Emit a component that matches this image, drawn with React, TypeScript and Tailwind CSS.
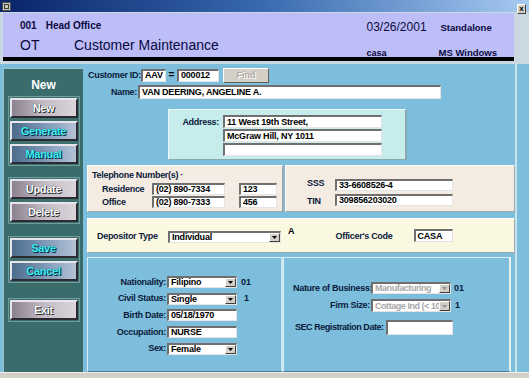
import React from "react";

const LBL = "text-[9px] font-bold text-[#0b1a3c] tracking-[-0.3px] leading-none whitespace-nowrap";

function Field({ cls, text, gray }: { cls: string; text?: string; gray?: boolean }) {
  return (
    <div
      className={`bg-white border-t-2 border-l-2 border-t-[#6f6f6f] border-l-[#6f6f6f] border-b border-r border-b-[#e4e4e4] border-r-[#e4e4e4] flex items-center pl-[2px] text-[9px] font-bold leading-none tracking-[-0.2px] overflow-hidden whitespace-nowrap ${gray ? "text-[#a8a8a8]" : "text-black"} ${cls}`}
    >
      {text}
    </div>
  );
}

function Select({ cls, text, gray }: { cls: string; text: string; gray?: boolean }) {
  return (
    <div
      className={`bg-white border-t-2 border-l-2 border-t-[#6f6f6f] border-l-[#6f6f6f] border-b border-r border-b-[#e4e4e4] border-r-[#e4e4e4] flex items-stretch text-[9px] font-bold leading-none overflow-hidden whitespace-nowrap ${gray ? "text-[#a8a8a8] tracking-[-0.45px]" : "text-black tracking-[-0.2px]"} ${cls}`}
    >
      <div className="flex-1 flex items-center pl-[2px] overflow-hidden">{text}</div>
      <div className="w-[11px] shrink-0 bg-[#d4d0c8] border border-t-white border-l-white border-b-[#404040] border-r-[#404040] flex items-center justify-center">
        <svg width="5" height="3" viewBox="0 0 5 3">
          <path d="M0 0H5L2.5 3Z" fill={gray ? "#909090" : "#000"} />
        </svg>
      </div>
    </div>
  );
}

function SideBtn({ label, blue }: { label: string; blue?: boolean }) {
  return (
    <div
      className={`w-[68px] h-[20px] flex items-center justify-center border-2 border-t-[#e8e4ec] border-l-[#e8e4ec] border-b-[#2a2a30] border-r-[#2a2a30] text-[11px] font-bold leading-none tracking-[-0.3px] ${
        blue
          ? "bg-gradient-to-r from-[#4c6c8c] via-[#7d98b6] to-[#b4c2d6] text-[#3ef0f4] [text-shadow:0_0_1px_#0b2a40,1px_1px_0_#0b2a40]"
          : "bg-gradient-to-r from-[#8c8290] via-[#c4bcc6] to-[#dcd4dc] text-white [text-shadow:0_0_1px_#202020,1px_1px_0_#303030]"
      }`}
    >
      {label}
    </div>
  );
}

function Group({ children }: { children: React.ReactNode }) {
  return (
    <div className="flex flex-col gap-[3px] p-[1px] border border-[#6f9c9c] bg-[#3f7070]">{children}</div>
  );
}

export default function App() {
  return (
    <div className="w-[529px] h-[378px] bg-[#d4d0c8] flex flex-col overflow-hidden font-['Liberation_Sans',Arial,sans-serif]">
      {/* title bar */}
      <div className="h-[12px] flex items-center bg-gradient-to-r from-[#0a246a] via-[#3a6ab0] to-[#a6caf0]">
        <div className="ml-[2px] w-[9px] h-[9px] bg-[#c8c4bc] border border-[#505050] flex items-center justify-center">
          <div className="w-[5px] h-[5px] border border-[#404040]" />
        </div>
      </div>
      {/* header */}
      <div className="h-[52px] flex bg-[#cad8e2]">
        <div className="ml-[3px] mt-[1px] w-[511px] h-[48px] bg-[#bdbdf7] border-b-4 border-black flex text-[#0a0a40]">
          <div className="flex flex-col pl-[17px] pt-[8px]">
            <div className="flex items-center text-[10px] font-bold leading-none">
              <span>001</span>
              <span className="ml-[9px]">Head Office</span>
            </div>
            <div className="flex items-center text-[14px] leading-none mt-[7px]">
              <span className="w-[54px]">OT</span>
              <span>Customer Maintenance</span>
            </div>
          </div>
          <div className="ml-auto flex flex-col pr-[17px] pt-[8px]">
            <div className="flex items-end">
              <span className="text-[12px] leading-none w-[74px]">03/26/2001</span>
              <span className="text-[9.5px] font-bold leading-none mb-[1px]">Standalone</span>
            </div>
            <div className="flex items-end mt-[15px]">
              <span className="text-[9px] font-bold leading-none w-[72px]">casa</span>
              <span className="text-[9.5px] font-bold leading-none">MS Windows</span>
            </div>
          </div>
        </div>
        <div className="flex-1 relative">
          <div className="absolute left-[3px] -top-[8px] w-[9px] h-[10px] bg-[#d4d0c8] border border-t-white border-l-white border-b-[#404040] border-r-[#404040] text-[8px] font-bold leading-none flex items-center justify-center">
            x
          </div>
        </div>
      </div>
      {/* body */}
      <div className="h-[308px] flex bg-[#7cbedb]">
        {/* sidebar */}
        <div className="ml-[3px] mt-[4px] w-[80px] h-[304px] bg-[#3b6c6c] border-l border-t border-[#9cc4c8] flex flex-col items-center">
          <div className="h-[27px] flex items-center justify-center text-white text-[12px] font-bold leading-none pt-[4px]">New</div>
          <Group>
            <SideBtn label="New" />
            <SideBtn label="Generate" blue />
            <SideBtn label="Manual" blue />
          </Group>
          <div className="h-[11px]" />
          <Group>
            <SideBtn label="Update" />
            <SideBtn label="Delete" />
          </Group>
          <div className="h-[12px]" />
          <Group>
            <SideBtn label="Save" blue />
            <SideBtn label="Cancel" blue />
          </Group>
          <div className="h-[15px]" />
          <Group>
            <SideBtn label="Exit" />
          </Group>
        </div>
        {/* main */}
        <div className="ml-[4px] w-[430px] flex flex-col border-r-2 border-[#c8e4ee]">
          {/* customer id */}
          <div className="mt-[4px] h-[14px] flex items-center">
            <span className={`${LBL} ml-[1px] w-[53px]`}>Customer ID:</span>
            <Field cls="w-[25px] h-[13px]" text="AAV" />
            <span className="w-[11px] text-center text-[10px] font-bold leading-none">=</span>
            <Field cls="w-[42px] h-[13px]" text="000012" />
            <div className="ml-[4px] w-[46px] h-[15px] bg-[#d4d0c8] border border-t-white border-l-white border-b-[#606060] border-r-[#606060] flex items-center justify-center text-[9px] font-bold text-[#b0aca6] [text-shadow:1px_1px_0_#fff] leading-none">
              Find
            </div>
          </div>
          {/* name */}
          <div className="mt-[3px] h-[14px] flex items-center">
            <span className={`${LBL} w-[51px] text-right pr-[1px]`}>Name:</span>
            <Field cls="w-[303px] h-[14px]" text="VAN DEERING, ANGELINE A." />
          </div>
          {/* address */}
          <div className="mt-[10px] ml-[81px] w-[239px] h-[51px] bg-[#c6ecec] border border-t-[#e8f8f8] border-l-[#e8f8f8] border-b-[#8aa8b0] border-r-[#8aa8b0] border-r-2 flex pt-[5px]">
            <span className={`${LBL} w-[50px] text-right pt-[3px]`}>Address:</span>
            <div className="ml-[4px] flex flex-col gap-[1px]">
              <Field cls="w-[159px] h-[13px]" text="11 West 19th Street," />
              <Field cls="w-[159px] h-[13px]" text="McGraw Hill, NY 1011" />
              <Field cls="w-[159px] h-[13px]" text="" />
            </div>
          </div>
          {/* telephone + sss */}
          <div className="mt-[5px] h-[47px] flex">
            <div className="w-[197px] bg-[#f4ece2] border border-t-[#ffffff] border-l-[#ffffff] border-b-[#9aa8b0] border-r-[#9aa8b0] border-r-2 flex flex-col pl-[4px] pt-[5px]">
              <span className={LBL}>Telephone Number(s) ·</span>
              <div className="mt-[3px] flex items-center h-[12px]">
                <span className={`${LBL} ml-[10px] w-[50px]`}>Residence</span>
                <Field cls="w-[73px] h-[12px]" text="(02) 890-7334" />
                <Field cls="ml-[14px] w-[38px] h-[12px]" text="123" />
              </div>
              <div className="mt-[1px] flex items-center h-[12px]">
                <span className={`${LBL} ml-[10px] w-[50px]`}>Office</span>
                <Field cls="w-[73px] h-[12px]" text="(02) 890-7333" />
                <Field cls="ml-[14px] w-[38px] h-[12px]" text="456" />
              </div>
            </div>
            <div className="ml-[1px] w-[230px] bg-[#f4ece2] border border-t-[#ffffff] border-l-[#ffffff] border-b-[#9aa8b0] border-r-[#9aa8b0] flex flex-col pt-[13px] pl-[21px]">
              <div className="flex items-center h-[12px]">
                <span className={`${LBL} w-[28px] -mt-[4px]`}>SSS</span>
                <Field cls="w-[118px] h-[12px]" text="33-6608526-4" />
              </div>
              <div className="mt-[3px] flex items-center h-[12px]">
                <span className={`${LBL} w-[28px] mt-[3px]`}>TIN</span>
                <Field cls="w-[118px] h-[12px]" text="309856203020" />
              </div>
            </div>
          </div>
          {/* depositor */}
          <div className="mt-[6px] w-[428px] h-[35px] bg-[#fbf8e2] border border-t-white border-l-white border-b-[#9aa8b0] border-r-[#9aa8b0] flex items-center pl-[9px]">
            <span className={`${LBL} w-[71px] mt-[1px]`}>Depositor Type</span>
            <Select cls="w-[113px] h-[12px] mt-[2px]" text="Individual" />
            <span className="ml-[7px] -mt-[9px] text-[9px] font-bold leading-none">A</span>
            <span className={`${LBL} ml-[41px] w-[78px] mt-[1px]`}>Officer's Code</span>
            <Field cls="w-[39px] h-[13px]" text="CASA" />
          </div>
          {/* bottom panels */}
          <div className="mt-[4px] flex h-[115px]">
            <div className="w-[196px] border border-t-[#d8eef6] border-l-[#d8eef6] border-b-[#4a7a90] border-r-[#c8e4ee] border-r-2 flex flex-col pt-[18px]">
              {[
                { l: "Nationality:", t: "Filipino", sel: true, code: "01" },
                { l: "Civil Status:", t: "Single", sel: true, code: "1" },
                { l: "Birth Date:", t: "05/18/1970", sel: false },
                { l: "Occupation:", t: "NURSE", sel: false },
                { l: "Sex:", t: "Female", sel: true },
              ].map((r) => (
                <div key={r.l} className="flex items-center h-[12px] mb-[4.7px]">
                  <span className={`${LBL} w-[79px] text-right pr-[1px]`}>{r.l}</span>
                  {r.sel ? (
                    <Select cls="w-[70px] h-[12px]" text={r.t} />
                  ) : (
                    <Field cls="w-[70px] h-[12px]" text={r.t} />
                  )}
                  {r.code && (
                    <span className={`ml-[4px] text-[9px] font-bold leading-none text-[#0b1a3c] ${r.code === "1" ? "pl-[3px]" : ""}`}>
                      {r.code}
                    </span>
                  )}
                </div>
              ))}
            </div>
            <div className="w-[228px] border border-t-[#d8eef6] border-l-[#d8eef6] border-b-[#4a7a90] border-r-[#e8f0f0] border-r-2 flex flex-col pt-[24px] pl-[9px]">
              <div className="flex items-center h-[12px]">
                <span className={`${LBL} w-[78px] text-right pr-[1px]`}>Nature of Business:</span>
                <Select cls="w-[80px] h-[12px]" text="Manufacturing" gray />
                <span className="ml-[3px] text-[9px] font-bold leading-none text-[#0b1a3c]">01</span>
              </div>
              <div className="mt-[5px] flex items-center h-[13px]">
                <span className={`${LBL} w-[78px] text-right pr-[1px]`}>Firm Size:</span>
                <Select cls="w-[80px] h-[13px]" text="Cottage Ind (< 10" gray />
                <span className="ml-[4px] text-[9px] font-bold leading-none text-[#0b1a3c]">1</span>
              </div>
              <div className="mt-[8px] flex items-center h-[15px]">
                <span className={`${LBL} ml-[2px] mr-[2px] shrink-0 tracking-[-0.45px]`}>SEC Registration Date:</span>
                <Field cls="w-[67px] h-[15px] shrink-0" text="" />
              </div>
            </div>
          </div>
        </div>
      </div>
      <div className="flex-1 bg-[#d4d0c8] border-t border-[#eeeeee]" />
    </div>
  );
}
